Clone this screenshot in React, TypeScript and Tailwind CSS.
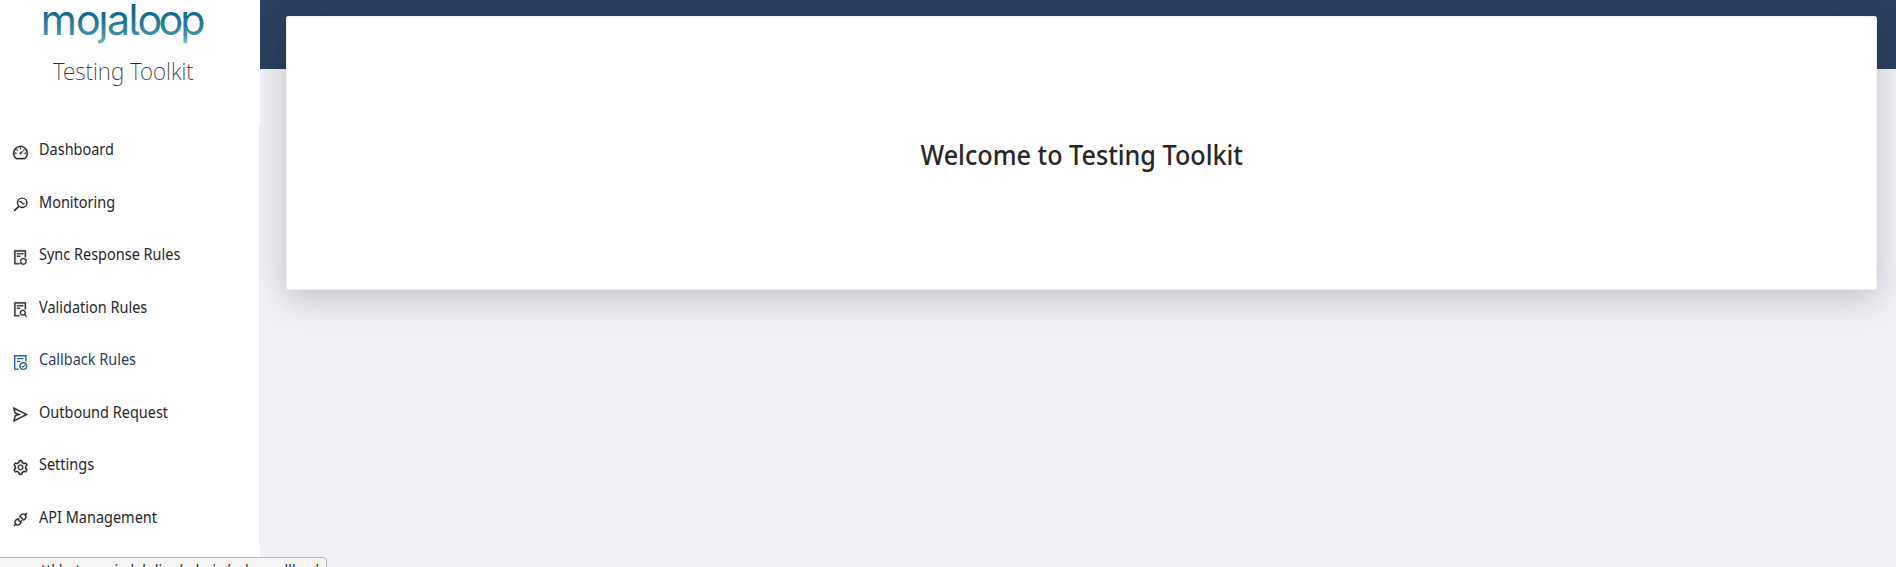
import type { ReactNode } from "react";
import {
  AiOutlineApi,
  AiOutlineDashboard,
  AiOutlineFileSearch,
  AiOutlineFileSync,
  AiOutlineSend,
  AiOutlineSetting,
} from "react-icons/ai";

function MonitorIcon() {
  return (
    <svg viewBox="0 0 17 17" width="17" height="17" fill="none" stroke="currentColor" strokeWidth="1.4">
      <circle cx="10.2" cy="6.8" r="4.7" />
      <path d="M6.8 10.2 2.2 14.9" strokeWidth="1.6" />
      <path d="M7.4 5.6H8.8L11 7.9H12.6" strokeWidth="1.3" />
    </svg>
  );
}

function CallbackIcon() {
  return (
    <svg viewBox="0 0 17 17" width="17" height="17" fill="none" stroke="currentColor" strokeWidth="1.4">
      <path d="M6.9 15.1H2.7V1.7H13.9V7.4" />
      <path d="M5 4.7H11.6M5 7.4H8.3" strokeWidth="1.2" />
      <circle cx="11.3" cy="12.1" r="3.3" />
      <path d="M9.8 12.2 10.9 13.3 13 10.8" strokeWidth="1.1" />
    </svg>
  );
}

function Logo() {
  return (
    <svg width="164" height="48" viewBox="0 0 164 48" className="block" role="img">
      <defs>
        <linearGradient id="logoFill" gradientUnits="userSpaceOnUse" x1="0" y1="2" x2="0" y2="46">
          <stop offset="0" stopColor="#045b86" />
          <stop offset="0.4" stopColor="#1c7396" />
          <stop offset="0.75" stopColor="#4090a5" />
          <stop offset="1" stopColor="#8cc8cc" />
        </linearGradient>
        <clipPath id="logoClip">
          <path d="M0 0H56V11H67V0H164V48H0Z" />
        </clipPath>
      </defs>
      <g clipPath="url(#logoClip)">
        <text
          x="-0.2 36 59.2 68 90.2 99.5 121.1 143.5"
          y="34.9"
          transform="scale(0.97 1)"
          fill="url(#logoFill)"
          className="font-['Inter',sans-serif] text-[42.5px] [font-feature-settings:'cv05']"
        >
          mojaloop
        </text>
      </g>
    </svg>
  );
}

const items: { label: string; icon: ReactNode; active?: boolean }[] = [
  { label: "Dashboard", icon: <AiOutlineDashboard className="stroke-[18]" /> },
  { label: "Monitoring", icon: <MonitorIcon /> },
  { label: "Sync Response Rules", icon: <AiOutlineFileSync className="stroke-[18]" /> },
  { label: "Validation Rules", icon: <AiOutlineFileSearch className="stroke-[18]" /> },
  { label: "Callback Rules", icon: <CallbackIcon />, active: true },
  { label: "Outbound Request", icon: <AiOutlineSend className="stroke-[18]" /> },
  { label: "Settings", icon: <AiOutlineSetting className="stroke-[18]" /> },
  { label: "API Management", icon: <AiOutlineApi className="stroke-[18]" /> },
];

export default function App() {
  return (
    <div className="relative flex h-[567px] w-full overflow-hidden bg-[#f0f1f6] font-['Noto_Sans',sans-serif] text-[#272727]">
      <aside className="z-10 flex w-[260px] shrink-0 flex-col bg-white">
        <div className="pl-[41px]">
          <Logo />
        </div>
        <div className="mt-[5px] mb-px pl-[53px] text-[23px] leading-[36px] font-extralight text-[#303030]">
          <span className="inline-block origin-left scale-x-[0.976]">Testing Toolkit</span>
        </div>
        <nav className="mt-[33px] flex flex-col border-r border-[#f0f0f0]">
          {items.map((it) => (
            <a
              key={it.label}
              className={
                it.active
                  ? "flex h-[52.5px] items-center gap-[10px] pl-3 text-[#2a3f5f]"
                  : "flex h-[52.5px] items-center gap-[10px] pl-3"
              }
            >
              <span className={it.active ? "mt-[6px] text-[17px] text-[#2b649c]" : "mt-[6px] text-[17px]"}>{it.icon}</span>
              <span className="mt-[-0.5px] origin-left scale-x-[0.905] text-[16px] font-normal whitespace-nowrap">
                {it.label}
              </span>
            </a>
          ))}
        </nav>
      </aside>
      <main className="flex grow flex-col">
        <div className="h-[69px] bg-[#2a3f5f]" />
        <section className="mt-[-53px] ml-[26px] flex h-[274px] w-[1591px] items-center justify-center rounded-[2px] border border-[#f0f0f0] bg-white pt-[5px] shadow-[0_8px_32px_rgba(0,0,0,0.2)]">
          <h1 className="scale-x-[0.95] text-[26.5px] font-medium">Welcome to Testing Toolkit</h1>
        </section>
      </main>
      <div className="absolute top-[557px] left-[-1px] z-20 h-[30px] w-[328px] rounded-tr-[4px] border border-[#b9b6ae] bg-[#f6f5f3] pt-px pl-[41px] text-[16px] leading-[22px] whitespace-nowrap">
        <span className="inline-block origin-left scale-x-[0.888]">ttkbeta.moja-lab.live/admin/rules_callback</span>
      </div>
    </div>
  );
}
